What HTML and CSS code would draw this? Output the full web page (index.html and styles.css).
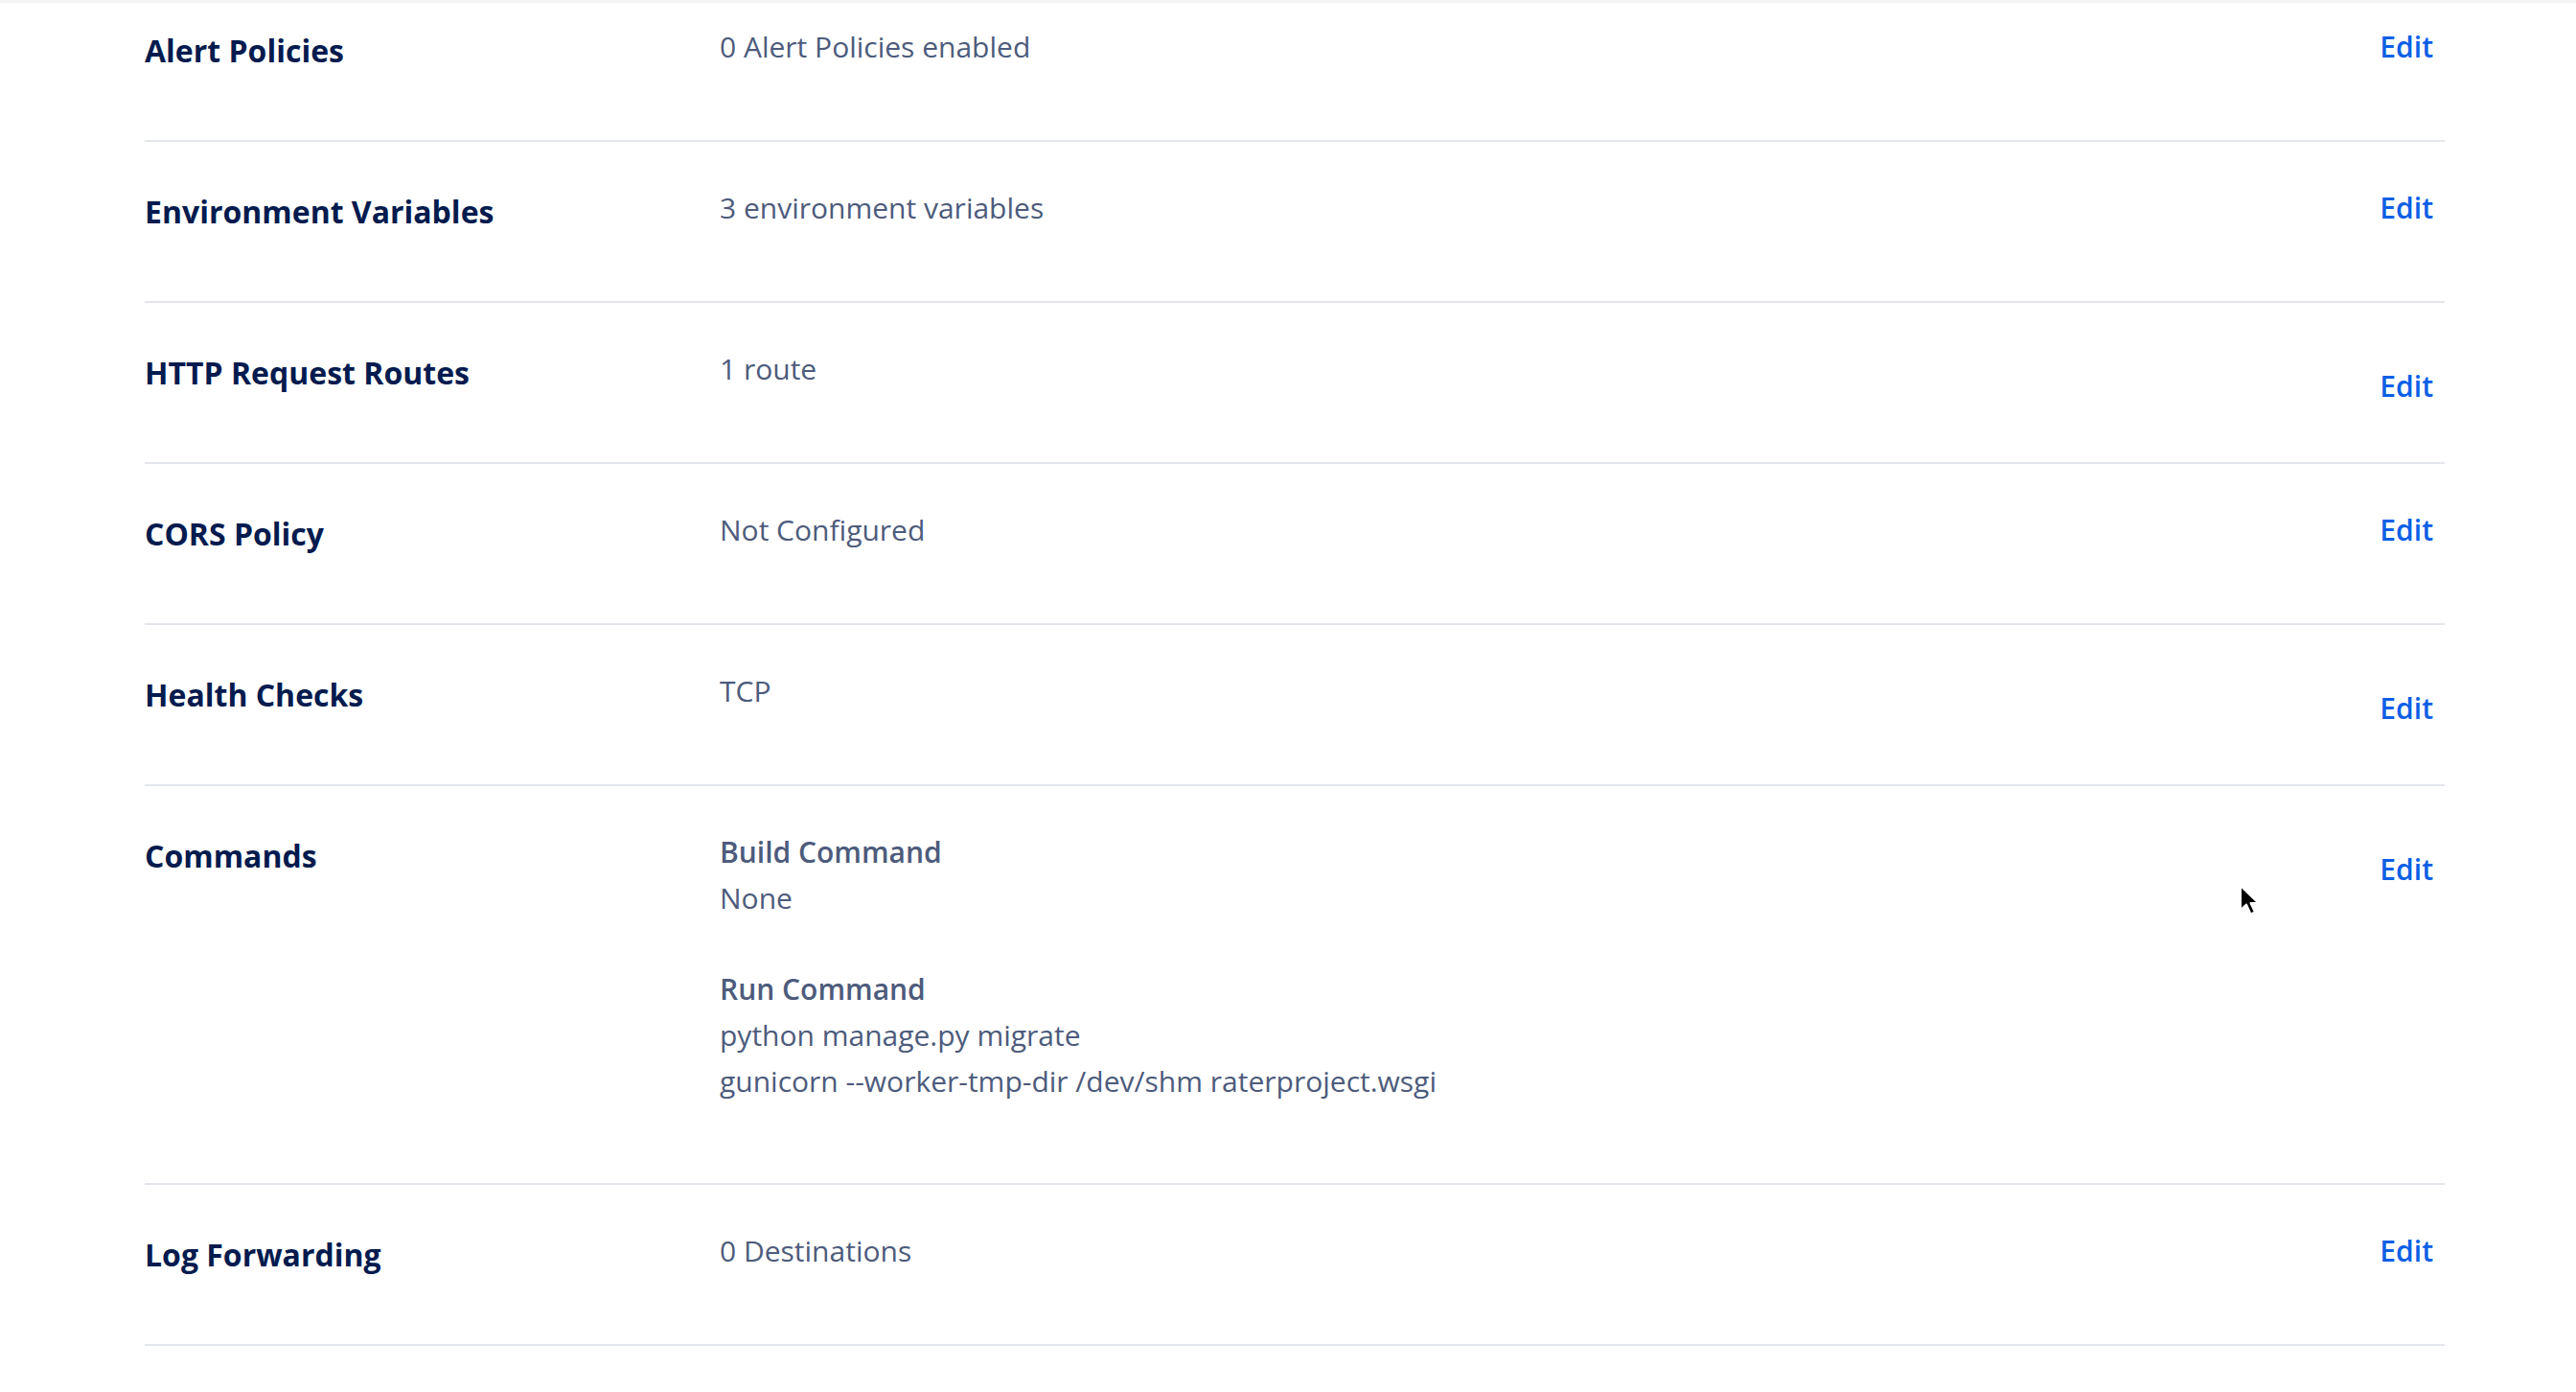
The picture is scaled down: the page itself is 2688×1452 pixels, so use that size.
FILE: index.html
```html
<!DOCTYPE html>
<html lang="en">
<head>
<meta charset="utf-8">
<title>App Settings</title>
<link rel="stylesheet" href="styles.css">
</head>
<body>
<div class="topedge"></div>
<main class="settings">
  <section class="row">
    <h3 class="row__title">Alert Policies</h3>
    <div class="row__value"><p class="line">0 Alert Policies enabled</p></div>
    <a class="row__edit" href="#">Edit</a>
  </section>
  <section class="row">
    <h3 class="row__title">Environment Variables</h3>
    <div class="row__value"><p class="line">3 environment variables</p></div>
    <a class="row__edit" href="#">Edit</a>
  </section>
  <section class="row">
    <h3 class="row__title">HTTP Request Routes</h3>
    <div class="row__value"><p class="line">1 route</p></div>
    <a class="row__edit row__edit--low" href="#">Edit</a>
  </section>
  <section class="row">
    <h3 class="row__title">CORS Policy</h3>
    <div class="row__value"><p class="line">Not Configured</p></div>
    <a class="row__edit" href="#">Edit</a>
  </section>
  <section class="row">
    <h3 class="row__title">Health Checks</h3>
    <div class="row__value"><p class="line">TCP</p></div>
    <a class="row__edit row__edit--low" href="#">Edit</a>
  </section>
  <section class="row row--tall">
    <h3 class="row__title">Commands</h3>
    <div class="row__value">
      <div class="cmd">
        <p class="line line--label">Build Command</p>
        <p class="line">None</p>
      </div>
      <div class="cmd">
        <p class="line line--label">Run Command</p>
        <p class="line">python manage.py migrate</p>
        <p class="line">gunicorn --worker-tmp-dir /dev/shm raterproject.wsgi</p>
      </div>
    </div>
    <a class="row__edit row__edit--low" href="#">Edit</a>
  </section>
  <section class="row">
    <h3 class="row__title">Log Forwarding</h3>
    <div class="row__value"><p class="line">0 Destinations</p></div>
    <a class="row__edit" href="#">Edit</a>
  </section>
</main>
<svg class="cursor" width="26" height="36" viewBox="0 0 26 36" aria-hidden="true">
  <path d="M3 2 L3 27 L9 21.5 L13.5 31.5 L18 29.5 L13.5 20 L21.5 20 Z" fill="#000" stroke="#fff" stroke-width="2" stroke-linejoin="round"/>
</svg>
</body>
</html>
```
FILE: styles.css
```css
html, body {
  margin: 0;
  padding: 0;
  background: #ffffff;
}

body {
  font-family: "Open Sans", Lato, "Liberation Sans", sans-serif;
  color: #4d5b7c;
  position: relative;
  min-height: 1452px;
  overflow: hidden;
}

.topedge {
  position: fixed;
  top: 0;
  left: 0;
  right: 0;
  height: 3px;
  background: #f4f5f7;
  z-index: 2;
}

.settings {
  width: 2400px;
  margin: -20px 0 0 151px;
}

.row {
  display: flex;
  align-items: flex-start;
  padding: 47px 0 71px;
  border-bottom: 2px solid #e3e6eb;
}

.row__title {
  margin: 2px 0 -2px;
  width: 600px;
  flex: 0 0 600px;
  font-size: 32px;
  line-height: 48px;
  font-weight: 700;
  color: #031b4e;
}

.row__value {
  flex: 1 1 auto;
  display: flex;
  flex-direction: column;
  gap: 47px;
}

.cmd {
  display: flex;
  flex-direction: column;
}

.row--tall {
  padding-bottom: 80px;
}

.line {
  margin: 0;
  margin-top: -2px;
  margin-bottom: 2px;
  font-size: 30px;
  line-height: 48px;
  color: #4d5b7c;
}

.line--label {
  font-weight: 600;
}

.row__edit {
  margin-right: 12px;
  margin-top: -2px;
  margin-bottom: 2px;
  font-size: 30px;
  line-height: 48px;
  font-weight: 600;
  color: #0b5fe6;
  text-decoration: none;
}

.row__edit--low {
  margin-top: 16px;
  margin-bottom: -16px;
}

.cursor {
  position: absolute;
  left: 2335px;
  top: 922px;
}
```
